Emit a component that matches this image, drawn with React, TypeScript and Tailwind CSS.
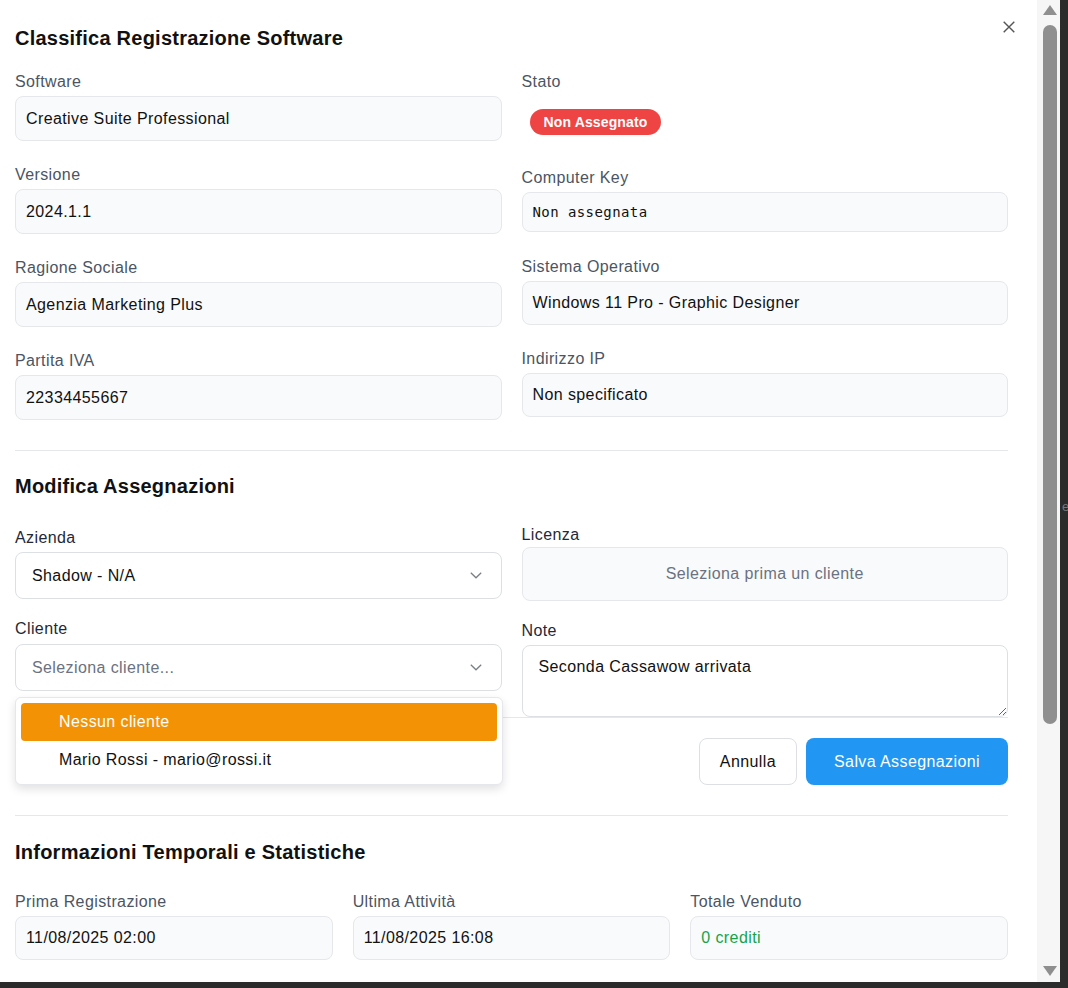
import React from "react"

function ReadField({ label, value, className = "", mono = false, boxH = "h-[45px]" }: { label: string; value: React.ReactNode; className?: string; mono?: boolean; boxH?: string }) {
  return (
    <div className={className}>
      <div className="h-6 leading-6 text-base text-[#4b5563] mb-[2px]">{label}</div>
      <div
        className={`${boxH} flex items-center rounded-lg border border-[#e5e7eb] bg-[#f9fafb] px-[10px] text-[#111] ${
          mono ? "font-['DejaVu_Sans_Mono',monospace] text-[14px] tracking-[0.03em]" : "text-base"
        }`}
      >
        {value}
      </div>
    </div>
  )
}

function Chevron() {
  return (
    <svg width="12" height="7" viewBox="0 0 12 7" fill="none" className="shrink-0">
      <path d="M0.8 0.8 L6 5.8 L11.2 0.8" stroke="#7b7f86" strokeWidth="1.3" />
    </svg>
  )
}

function Scrollbar() {
  return (
    <div className="w-[23px] h-full bg-[#f6f6f6] flex flex-col items-center">
      <svg width="14" height="10" viewBox="0 0 14 10" className="mt-[5px] ml-[2px]">
        <path d="M7 0 L14 10 L0 10 Z" fill="#8f8f8f" />
      </svg>
      <div className="mt-[10px] ml-[2px] w-[14px] h-[699px] rounded-full bg-[#8f8f8f]" />
      <div className="flex-1" />
      <svg width="14" height="10" viewBox="0 0 14 10" className="mb-[6px] ml-[2px]">
        <path d="M0 0 L14 0 L7 10 Z" fill="#8f8f8f" />
      </svg>
    </div>
  )
}

export default function App() {
  return (
    <div className="relative w-[1068px] h-[988px] overflow-hidden bg-[#2b2b2b] font-['Liberation_Sans',Arial,sans-serif] tracking-[0.025em]">
      <div className="flex w-[1060px] h-[982px] bg-white">
        <div className="relative w-[1037px] h-full overflow-hidden pl-[15px] pr-[29px] pt-6">
          <button className="absolute left-[1003px] top-[21px] w-3 h-3">
            <svg width="12" height="12" viewBox="0 0 12 12" fill="none">
              <path d="M0.7 0.7 L11.3 11.3 M11.3 0.7 L0.7 11.3" stroke="#555" strokeWidth="1.4" />
            </svg>
          </button>

          <h2 className="text-xl leading-7 font-bold text-[#111] mb-[18px] tracking-[0.012em]">Classifica Registrazione Software</h2>

          <div className="grid grid-cols-2 gap-x-5">
            <div className="flex flex-col">
              <ReadField label="Software" value="Creative Suite Professional" />
              <ReadField label="Versione" value="2024.1.1" className="mt-[22px]" />
              <ReadField label="Ragione Sociale" value="Agenzia Marketing Plus" className="mt-[22px]" />
              <ReadField label="Partita IVA" value="22334455667" className="mt-[22px]" />
            </div>
            <div className="flex flex-col">
              <div>
                <div className="h-6 leading-6 text-base text-[#4b5563]">Stato</div>
                <div className="h-[52px] flex items-center pl-2 pt-[4px]">
                  <span className="rounded-full bg-[#ef4444] px-3.5 py-[3px] text-sm leading-5 font-bold text-white tracking-[0.01em]">Non Assegnato</span>
                </div>
              </div>
              <ReadField label="Computer Key" value="Non assegnata" mono boxH="h-[40px]" className="mt-[20px]" />
              <ReadField label="Sistema Operativo" value="Windows 11 Pro - Graphic Designer" boxH="h-[44px]" className="mt-[23px]" />
              <ReadField label="Indirizzo IP" value="Non specificato" boxH="h-[44px]" className="mt-[22px]" />
            </div>
          </div>

          <div className="mt-[30px] border-t border-[#e5e7eb] pt-[21px]">
            <h2 className="text-xl leading-7 font-bold text-[#111] tracking-[0.012em]">Modifica Assegnazioni</h2>
            <div className="grid grid-cols-2 gap-x-5">
              <div className="flex flex-col pt-[26px]">
                <div className="h-6 leading-6 text-base text-[#1f2937] mb-[2px]">Azienda</div>
                <div className="h-[47px] flex items-center justify-between rounded-lg border border-[#dcdfe4] bg-white pl-4 pr-[19px] text-base text-[#111]">
                  <span>Shadow - N/A</span>
                  <Chevron />
                </div>
                <div className="mt-[18px] h-6 leading-6 text-base text-[#1f2937] mb-[3px]">Cliente</div>
                <div className="relative">
                  <div className="h-[47px] flex items-center justify-between rounded-lg border border-[#dcdfe4] bg-white pl-4 pr-[19px] text-base text-[#6b7280]">
                    <span>Seleziona cliente...</span>
                    <Chevron />
                  </div>
                  <div className="absolute left-0 top-full mt-[6px] z-10 w-[488px] rounded-md border border-[#e5e7eb] bg-white p-[5px] shadow-[0_4px_10px_rgba(0,0,0,0.12)]">
                    <div className="h-[38px] flex items-center rounded bg-[#f39204] pl-[38px] text-base text-white">Nessun cliente</div>
                    <div className="h-[38px] flex items-center pl-[38px] text-base text-[#111]">Mario Rossi - mario@rossi.it</div>
                  </div>
                </div>
              </div>
              <div className="flex flex-col pt-[23px]">
                <div className="h-6 leading-6 text-base text-[#1f2937]">Licenza</div>
                <div className="h-[54px] flex items-center justify-center rounded-lg border border-[#e5e7eb] bg-[#f9fafb] text-base text-[#6b7280]">
                  Seleziona prima un cliente
                </div>
                <div className="mt-[18px] h-6 leading-6 text-base text-[#1f2937] mb-[2px]">Note</div>
                <textarea
                  defaultValue="Seconda Cassawow arrivata"
                  className="block h-[72px] w-full rounded-lg border border-[#dcdfe4] bg-white px-4 pt-[9px] pb-[5px] text-base leading-6 text-[#111] outline-none tracking-[0.025em]"
                />
              </div>
            </div>
            <div className="border-t border-[#e5e7eb] pt-5 flex justify-end gap-[9px]">
              <button className="h-[47px] rounded-lg border border-[#dcdfe4] bg-white px-5 text-base text-[#111] tracking-[0.025em]">Annulla</button>
              <button className="h-[47px] rounded-lg bg-[#2196f3] px-7 text-base text-white tracking-[0.025em]">Salva Assegnazioni</button>
            </div>
          </div>

          <div className="mt-[30px] border-t border-[#e5e7eb] pt-[22px]">
            <h2 className="text-xl leading-7 font-bold text-[#111] tracking-[0.012em]">Informazioni Temporali e Statistiche</h2>
            <div className="mt-[24px] grid grid-cols-3 gap-x-5">
              <ReadField label="Prima Registrazione" value="11/08/2025 02:00" boxH="h-[44px]" />
              <ReadField label="Ultima Attività" value="11/08/2025 16:08" boxH="h-[44px]" />
              <ReadField label="Totale Venduto" value={<span className="text-[#16a34a]">0 crediti</span>} boxH="h-[44px]" />
            </div>
          </div>
        </div>
        <Scrollbar />
      </div>
      <span className="absolute left-[1062px] top-[497px] text-[13px] text-[#777]">e</span>
    </div>
  )
}
